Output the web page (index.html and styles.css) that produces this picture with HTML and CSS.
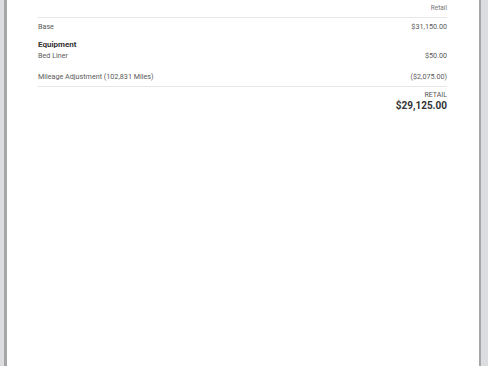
FILE: index.html
```html
<!DOCTYPE html>
<html>
<head>
<meta charset="utf-8">
<link rel="stylesheet" href="styles.css">
</head>
<body>
<div class="frame">
  <div class="page">
    <div class="head-row">Retail</div>
    <div class="row first"><span>Base</span><span>$31,150.00</span></div>
    <div class="group-title">Equipment</div>
    <div class="row"><span>Bed Liner</span><span>$50.00</span></div>
    <div class="row mileage"><span>Mileage Adjustment (102,831 Miles)</span><span>($2,075.00)</span></div>
    <div class="total">
      <div class="total-label">RETAIL</div>
      <div class="total-value">$29,125.00</div>
    </div>
  </div>
</div>
</body>
</html>
```
FILE: styles.css
```css
html, body {
  margin: 0;
  padding: 0;
  height: 100%;
}
body {
  background: #dcdde1;
  font-family: Roboto, "Liberation Sans", sans-serif;
  color: #5a5a5a;
  overflow: hidden;
}
.frame {
  height: 100%;
  padding: 0 7px 0 4px;
  box-sizing: border-box;
}
.page {
  height: 100%;
  background: #fff;
  border-left: 3px solid #a6a6a8;
  border-right: 2px solid #a6a6a8;
  padding: 0 32px 0 31px;
  box-sizing: border-box;
}
.head-row {
  font-size: 6.5px;
  text-align: right;
  color: #777;
  height: 17px;
  line-height: 17px;
  border-bottom: 1px solid #e6e6e6;
}
.row {
  display: flex;
  justify-content: space-between;
  font-size: 7.2px;
  line-height: 10px;
}
.row.first {
  margin-top: 4px;
}
.group-title {
  font-size: 8px;
  font-weight: 700;
  color: #333;
  margin-top: 7px;
  line-height: 12px;
}
.mileage {
  margin-top: 11px;
  padding-bottom: 4px;
  border-bottom: 1px solid #e6e6e6;
}
.total {
  text-align: right;
  padding-top: 4px;
}
.total-label {
  font-size: 7px;
  line-height: 8px;
  color: #555;
}
.total-value {
  font-size: 10px;
  font-weight: 700;
  color: #333;
  line-height: 13px;
}
```
